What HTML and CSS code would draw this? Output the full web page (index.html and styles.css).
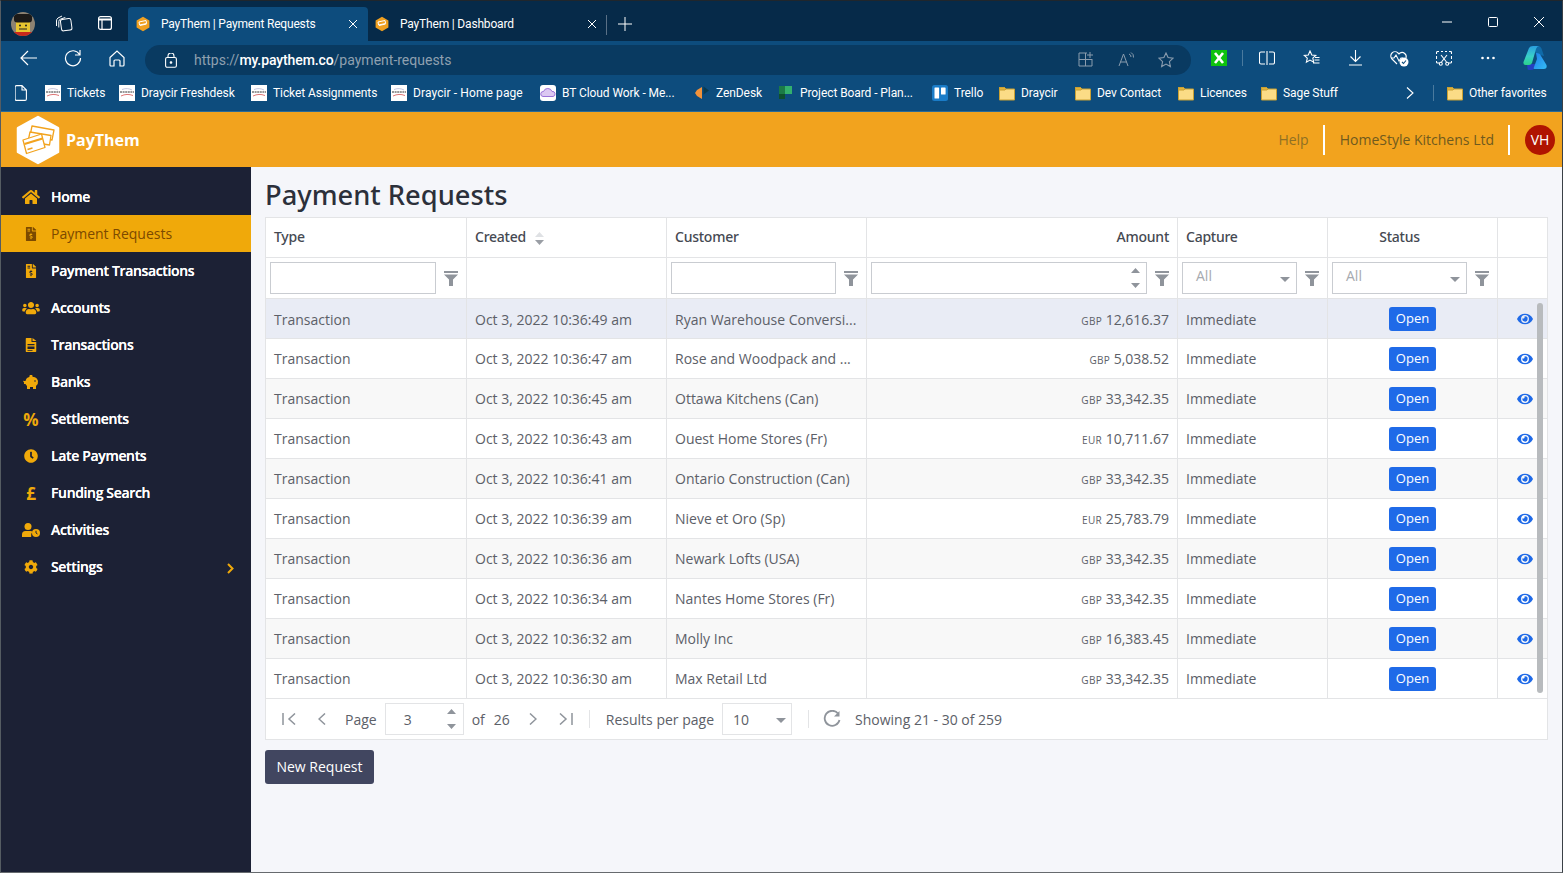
FILE: index.html
```html
<!DOCTYPE html>
<html lang="en">
<head>
<meta charset="utf-8">
<title>PayThem | Payment Requests</title>
<link rel="stylesheet" href="styles.css">
</head>
<body>
<svg class="defs" width="0" height="0" aria-hidden="true">
  <symbol id="fav" viewBox="0 0 16 16"><polygon points="8,.8 14.4,4.4 14.4,11.6 8,15.2 1.6,11.6 1.6,4.4" fill="#f0a020"/><path d="M4 6l7-1.5.6 3-7 1.5zM5 9.5l6.500-1.500" stroke="#fff" stroke-width="1" fill="none"/></symbol>
  <symbol id="dray" viewBox="0 0 16 16"><rect width="16" height="16" fill="#fff"/><path d="M1 7h14" stroke="#777" stroke-width="1.600" stroke-dasharray="2 .6"/><path d="M2 11c4-2 8-2 12-.5" stroke="#d77" fill="none"/><path d="M3 4.500c4-1.500 7-1 10 .5" stroke="#aac" fill="none" stroke-width=".7"/></symbol>
  <symbol id="folder" viewBox="0 0 16 16"><path d="M.5 2.500h5l1.500 1.500h8.500v11H.5z" fill="#fbdc86" stroke="#c9a033"/><path d="M.5 2.500h5l1.500 1.500-1 1H.5z" fill="#e0b23c" stroke="#c9a033"/></symbol>
  <symbol id="funnel" viewBox="0 0 14 15"><path d="M0 0h14v2H0zM0 3.500h14L9 8.500V15H5V8.500z" fill="#8f949b"/></symbol>
  <symbol id="eye" viewBox="0 0 576 512"><path fill="#1f6ae8" d="M572.52 241.4C518.29 135.59 410.93 64 288 64S57.68 135.64 3.48 241.41a32.35 32.35 0 0 0 0 29.19C57.71 376.41 165.07 448 288 448s230.32-71.64 284.52-177.41a32.35 32.35 0 0 0 0-29.19zM288 400a144 144 0 1 1 144-144 143.93 143.93 0 0 1-144 144zm0-240a95.31 95.31 0 0 0-25.31 3.79 47.85 47.85 0 0 1-66.9 66.9A95.78 95.78 0 1 0 288 160z"/></symbol>
  <symbol id="invoice" viewBox="0 0 384 512"><path fill="currentColor" d="M377 105L279.1 7c-4.5-4.5-10.6-7-17-7H256v128h128v-6.100c0-6.300-2.500-12.400-7-16.900zm-153 31V0H24C10.700 0 0 10.700 0 24v464c0 13.300 10.700 24 24 24h336c13.300 0 24-10.700 24-24V160H248c-13.200 0-24-10.800-24-24zM64 72c0-4.420 3.580-8 8-8h80c4.420 0 8 3.580 8 8v16c0 4.420-3.580 8-8 8H72c-4.420 0-8-3.580-8-8V72zm0 80v-16c0-4.420 3.580-8 8-8h80c4.420 0 8 3.580 8 8v16c0 4.420-3.580 8-8 8H72c-4.420 0-8-3.580-8-8zm144 263.880V440c0 4.420-3.580 8-8 8h-16c-4.420 0-8-3.580-8-8v-24.290c-11.290-.58-22.270-4.520-31.370-11.350-3.900-2.930-4.100-8.770-.57-12.140l11.750-11.210c2.770-2.640 6.890-2.760 10.130-.73 3.870 2.420 8.260 3.720 12.820 3.720h28.110c6.500 0 11.800-5.920 11.800-13.190 0-5.950-3.610-11.190-8.770-12.730l-45-13.500c-18.590-5.580-31.580-23.420-31.580-43.390 0-24.520 19.050-44.440 42.670-45.070V232c0-4.420 3.580-8 8-8h16c4.420 0 8 3.580 8 8v24.290c11.290.58 22.270 4.510 31.370 11.350 3.900 2.930 4.100 8.770.57 12.140l-11.750 11.210c-2.770 2.640-6.890 2.760-10.130.73-3.870-2.430-8.260-3.720-12.820-3.720h-28.110c-6.500 0-11.800 5.920-11.800 13.190 0 5.950 3.610 11.190 8.770 12.730l45 13.500c18.590 5.580 31.580 23.420 31.580 43.390 0 24.530-19.050 44.440-42.670 45.070z"/></symbol>
</svg>

<div class="frame">
  <div class="tabstrip">
    <svg class="avatar" width="24" height="24" viewBox="0 0 24 24"><defs><clipPath id="c"><circle cx="12" cy="12" r="12"/></clipPath></defs><g clip-path="url(#c)"><rect width="24" height="24" fill="#8d8272"/><rect x="5" y="9" width="14" height="11" fill="#e8c530"/><rect x="3" y="2" width="18" height="8.500" rx="3" fill="#1c1a18"/><rect x="3" y="20" width="18" height="4" fill="#c8281c"/><circle cx="9" cy="13.500" r="1" fill="#222"/><circle cx="15" cy="13.500" r="1" fill="#222"/><path d="M8 17h8" stroke="#222"/></g></svg>
    <svg class="tbtn" width="18" height="18" viewBox="0 0 18 18" fill="none" stroke="#fff"><rect x="6" y="4" width="10.500" height="11.500" rx="2" transform="rotate(-8 11 10)"/><path d="M3.800 12.500V6.500q0-2 2-2.500l4.500-1.500"/><path d="M1.500 11V6q0-2 1.500-3l4-2"/></svg>
    <svg class="tbtn" width="16" height="16" viewBox="0 0 16 16" fill="none" stroke="#fff" stroke-width="1.200"><rect x="1.600" y="1.600" width="12.800" height="12.800" rx="2"/><path d="M1.600 4.500h12.800" stroke-width="2"/><path d="M5 4.500v10" /></svg>
    <div class="tab active">
      <svg width="16" height="16"><use href="#fav"/></svg><span class="tabtitle">PayThem | Payment Requests</span>
      <svg class="x" width="10" height="10" viewBox="0 0 10 10" stroke="#fff"><path d="M1 1l8 8M9 1l-8 8"/></svg>
    </div>
    <div class="tab">
      <svg width="16" height="16"><use href="#fav"/></svg><span class="tabtitle">PayThem | Dashboard</span>
      <svg class="x" width="10" height="10" viewBox="0 0 10 10" stroke="#fff"><path d="M1 1l8 8M9 1l-8 8"/></svg>
    </div>
    <span class="tabsep"></span>
    <svg class="plus" width="14" height="14" viewBox="0 0 14 14" stroke="#fff"><path d="M7 0v14M0 7h14"/></svg>
    <div class="winbtns">
      <svg width="10" height="10" viewBox="0 0 10 10" stroke="#fff"><path d="M0 5h10"/></svg>
      <svg width="10" height="10" viewBox="0 0 10 10" stroke="#fff" fill="none"><rect x=".5" y=".5" width="9" height="9" rx="1"/></svg>
      <svg width="10" height="10" viewBox="0 0 10 10" stroke="#fff"><path d="M0 0l10 10M10 0L0 10"/></svg>
    </div>
  </div>

  <div class="toolbar">
    <span class="ti"><svg width="18" height="16" viewBox="0 0 18 16" fill="none" stroke="#fff" stroke-width="1.200"><path d="M17 8H1M8 1L1 8l7 7"/></svg></span>
    <span class="ti"><svg width="18" height="18" viewBox="0 0 18 18" fill="none" stroke="#fff" stroke-width="1.200"><path d="M15.500 5.500A7.500 7.500 0 1 0 16.500 9M16 1v5h-5"/></svg></span>
    <span class="ti"><svg width="16" height="17" viewBox="0 0 16 17" fill="none" stroke="#fff" stroke-width="1.200"><path d="M1 7.500L8 1l7 6.500V15a1 1 0 0 1-1 1h-3v-5a1 1 0 0 0-1-1H6a1 1 0 0 0-1 1v5H2a1 1 0 0 1-1-1z"/></svg></span>
    <div class="address">
      <svg class="lock" width="12" height="15" viewBox="0 0 12 15" fill="none" stroke="#fff" stroke-width="1.100"><rect x=".6" y="4.500" width="10.800" height="9.800" rx="1.500"/><path d="M3 4.500V3a3 3 0 0 1 6 0v1.500"/><circle cx="6" cy="9.500" r=".8" fill="#fff"/></svg>
      <span class="url"><span class="dim">https://</span><span class="host">my.paythem.co</span><span class="dim">/payment-requests</span></span>
      <span class="addr-icons">
        <svg width="16" height="15" viewBox="0 0 16 15" fill="none" stroke="#8a9cae"><path d="M9 1H1v13h13V7M1 7.500h13M7.500 1v13M12 0v6M9 3h6"/></svg>
        <svg width="16" height="15" viewBox="0 0 16 15" fill="none" stroke="#8a9cae"><path d="M1 14L5.500 2 10 14M2.500 10h6M11 2a3 3 0 0 1 2 3M13 .5a5 5 0 0 1 2.500 5"/></svg>
        <svg width="16" height="16" viewBox="0 0 16 16" fill="none" stroke="#8a9cae" stroke-width="1.100"><path d="M8 1l2.100 4.600 5 .6-3.700 3.400 1 5L8 12.100 3.600 14.600l1-5L.9 6.200l5-.6z"/></svg>
      </span>
    </div>
    <span class="ti ext"><svg width="16" height="16" viewBox="0 0 16 16"><rect width="16" height="16" fill="#0ec20e"/><path d="M4 3l8 10M12 3L4 13" stroke="#fff" stroke-width="2.600"/></svg></span>
    <span class="tsep"></span>
    <span class="ti ta"><svg width="16" height="14" viewBox="0 0 16 14" fill="none" stroke="#fff" stroke-width="1.100"><path d="M6 1H2a1.500 1.500 0 0 0-1.500 1.500v9A1.500 1.500 0 0 0 2 13h4M10 1h4a1.500 1.500 0 0 1 1.500 1.500v9A1.500 1.500 0 0 1 14 13h-4M8 0v14"/></svg></span>
    <span class="ti ta"><svg width="17" height="16" viewBox="0 0 17 16" fill="none" stroke="#fff" stroke-width="1.100"><path d="M7 1l1.800 4 4 .4-3 2.800.9 4L7 10.100 3.400 12.200l.9-4-3-2.800 4-.4zM12 7.500h4.500M11.500 10h5M10 13h6.500" /></svg></span>
    <span class="ti ta"><svg width="13" height="16" viewBox="0 0 13 16" fill="none" stroke="#fff" stroke-width="1.100"><path d="M6.500 0v11M1.500 6.500l5 5 5-5M0 15h13"/></svg></span>
    <span class="ti ta"><svg width="19" height="17" viewBox="0 0 19 17" fill="none" stroke="#fff" stroke-width="1.100"><path d="M7 14L2 9a4.200 4.200 0 0 1 6-6l1 1 1-1a4.200 4.200 0 0 1 6 5"/><path d="M1 8h3l2-3 3 6 2-3h2"/><circle cx="14" cy="12" r="4.500" fill="#fff" stroke="none"/><path d="M12 12l1.500 1.500L16 10.500" stroke="#0d4c7d"/></svg></span>
    <span class="ti ta"><svg width="16" height="15" viewBox="0 0 16 15" fill="none" stroke="#fff" stroke-width="1.100"><path d="M3 .5H1.500a1 1 0 0 0-1 1V3M.5 5v3M5 .5h2M9 .5h2M13 .5h1.500a1 1 0 0 1 1 1V3M15.500 5v3M.5 10v1a1 1 0 0 0 1 1H3M15.500 10v1a1 1 0 0 1-1 1H13"/><path d="M5 4l5.500 7M11 4l-5.500 7"/><circle cx="4.800" cy="12.800" r="1.500"/><circle cx="11.200" cy="12.800" r="1.500"/></svg></span>
    <span class="ti ta"><svg width="14" height="4" viewBox="0 0 14 4" fill="#fff"><circle cx="1.500" cy="2" r="1.300"/><circle cx="7" cy="2" r="1.300"/><circle cx="12.500" cy="2" r="1.300"/></svg></span>
    <span class="ti copilot"><svg width="25" height="24" viewBox="0 0 25 24"><defs><linearGradient id="g1" x1="0" y1="0" x2="1" y2="1"><stop offset="0" stop-color="#1f7ee8"/><stop offset="1" stop-color="#34bcf6"/></linearGradient><linearGradient id="g2" x1="0" y1="0" x2="0" y2="1"><stop offset="0" stop-color="#2a9ee0"/><stop offset=".55" stop-color="#3ad0c8"/><stop offset="1" stop-color="#2ad08a"/></linearGradient></defs><path d="M10 0h5q3 0 4 4l2 6-8-2z" fill="#0f6aa8"/><path d="M4 18h9l-2 5q-1 1-3 1H6q-2 0-1.500-2z" fill="#2440c0"/><path d="M13 7q4 0 5 3l5.500 9q1 4-3 4H12q-2 0-1-2l3-8z" fill="url(#g1)"/><path d="M6 2q1-2 4-2h6q-2 0-3 3L9 17q-1 2-3 2H2.500q-2.500 0-2-3z" fill="url(#g2)"/></svg></span>
  </div>

  <div class="bookmarks">
    <svg class="bfile" width="12" height="16" viewBox="0 0 12 16" fill="none" stroke="#fff" stroke-width="1.100"><path d="M1.500.6h5.500l4.400 4.400v9a1.400 1.400 0 0 1-1.400 1.400h-8.500a1.400 1.400 0 0 1-1.400-1.400V2a1.400 1.400 0 0 1 1.400-1.400zM7 .6V5h4.400"/></svg>
    <a class="bm w1"><svg width="16" height="16"><use href="#dray"/></svg>Tickets</a>
    <a class="bm w2"><svg width="16" height="16"><use href="#dray"/></svg>Draycir Freshdesk</a>
    <a class="bm w3"><svg width="16" height="16"><use href="#dray"/></svg>Ticket Assignments</a>
    <a class="bm w4"><svg width="16" height="16"><use href="#dray"/></svg>Draycir - Home page</a>
    <a class="bm w5"><svg width="16" height="16" viewBox="0 0 16 16"><rect width="16" height="16" rx="3" fill="#fff"/><path d="M3 11.500a2.500 2.500 0 0 1 .5-5 4.500 4.500 0 0 1 8.500 0 2.500 2.500 0 0 1 1 5z" fill="#dcc8f2" stroke="#9a72d8"/></svg>BT Cloud Work - Me...</a>
    <a class="bm w6"><svg width="16" height="16" viewBox="0 0 16 16"><path d="M8 2v12L3 11 1 8l2-3z" fill="#f2923a"/><path d="M9.500 1.500v8L15 5.500z" fill="#0b3a50"/></svg>ZenDesk</a>
    <a class="bm w7"><svg width="16" height="16" viewBox="0 0 16 16"><rect x="1" y="1" width="6" height="13" fill="#1b7a47"/><rect x="7" y="1" width="7" height="8" fill="#33b06e"/><rect x="1" y="9" width="6" height="5" fill="#0e4f2e"/></svg>Project Board - Plan...</a>
    <a class="bm w8"><svg width="16" height="16" viewBox="0 0 16 16"><rect width="16" height="16" rx="2.500" fill="#1a7cc8"/><rect x="2.500" y="2.500" width="4.600" height="11" rx=".6" fill="#fff"/><rect x="9" y="2.500" width="4.600" height="7" rx=".6" fill="#fff"/></svg>Trello</a>
    <a class="bm w9"><svg width="16" height="16"><use href="#folder"/></svg>Draycir</a>
    <a class="bm w10"><svg width="16" height="16"><use href="#folder"/></svg>Dev Contact</a>
    <a class="bm w11"><svg width="16" height="16"><use href="#folder"/></svg>Licences</a>
    <a class="bm w12"><svg width="16" height="16"><use href="#folder"/></svg>Sage Stuff</a>
    <svg class="bmore" width="8" height="12" viewBox="0 0 8 12" fill="none" stroke="#fff" stroke-width="1.100"><path d="M1 .5L7 6l-6 5.500"/></svg>
    <span class="bsep"></span>
    <a class="bm other"><svg width="16" height="16"><use href="#folder"/></svg>Other favorites</a>
  </div>

  <header class="apphead">
    <svg class="logo" width="46" height="50" viewBox="0 0 46 50"><polygon points="23,2 43,13 43,37 23,48 3,37 3,13" fill="#fff" stroke="#fff" stroke-width="2.500" stroke-linejoin="round"/><g fill="#fff" stroke="#f2a31e" stroke-width="1.300" stroke-linejoin="round"><polygon points="17,11 39,15 37,25 15,21"/><polygon points="15,17 36,20.500 34.500,30 13,26.500"/><polygon points="8,25 26.500,19 30,32.500 11.500,38.500"/></g><path d="M9.500 29l18-5.500" stroke="#f2a31e" stroke-width="2.200"/><path d="M12.500 34.500l5-1.500" stroke="#f2a31e" stroke-width="1.500"/></svg>
    <span class="brand">PayThem</span>
    <span class="grow"></span>
    <span class="help">Help</span>
    <span class="hdiv"></span>
    <span class="company">HomeStyle Kitchens Ltd</span>
    <span class="hdiv"></span>
    <span class="vh">VH</span>
  </header>

  <div class="body">
    <nav class="side">
      <a class="nav"><svg class="ni" width="18" height="16" viewBox="0 0 576 512"><path fill="currentColor" d="M280.370 148.260L96 300.110V464a16 16 0 0 0 16 16l112.060-.29a16 16 0 0 0 15.920-16V368a16 16 0 0 1 16-16h64a16 16 0 0 1 16 16v95.640a16 16 0 0 0 16 16.050L464 480a16 16 0 0 0 16-16V300L295.670 148.260a12.190 12.190 0 0 0-15.300 0zM571.600 251.470L488 182.560V44.050a12 12 0 0 0-12-12h-56a12 12 0 0 0-12 12v72.610L318.470 43a48 48 0 0 0-61 0L4.340 251.470a12 12 0 0 0-1.600 16.900l25.500 31A12 12 0 0 0 45.150 301l235.220-193.740a12.190 12.190 0 0 1 15.300 0L530.900 301a12 12 0 0 0 16.900-1.600l25.500-31a12 12 0 0 0-1.700-16.930z"/></svg>Home</a>
      <a class="nav on"><svg class="ni" width="11" height="14"><use href="#invoice"/></svg>Payment Requests</a>
      <a class="nav"><svg class="ni" width="11" height="14"><use href="#invoice"/></svg>Payment Transactions</a>
      <a class="nav"><svg class="ni" width="18" height="14" viewBox="0 0 640 512"><path fill="currentColor" d="M96 224c35.300 0 64-28.700 64-64s-28.700-64-64-64-64 28.700-64 64 28.700 64 64 64zm448 0c35.300 0 64-28.700 64-64s-28.700-64-64-64-64 28.700-64 64 28.700 64 64 64zm32 32h-64c-17.600 0-33.500 7.100-45.100 18.600 40.300 22.100 68.900 62 75.100 109.400h66c17.700 0 32-14.300 32-32v-32c0-35.300-28.700-64-64-64zm-256 0c61.900 0 112-50.100 112-112S381.900 32 320 32 208 82.100 208 144s50.100 112 112 112zm76.800 32h-8.300c-20.800 10-43.900 16-68.500 16s-47.600-6-68.500-16h-8.300C179.600 288 128 339.600 128 403.200V432c0 26.500 21.500 48 48 48h288c26.500 0 48-21.500 48-48v-28.800c0-63.600-51.600-115.200-115.200-115.200zm-223.700-13.400C161.500 263.100 145.600 256 128 256H64c-35.300 0-64 28.700-64 64v32c0 17.700 14.300 32 32 32h65.900c6.300-47.400 34.900-87.300 75.200-109.400z"/></svg>Accounts</a>
      <a class="nav"><svg class="ni" width="11" height="14" viewBox="0 0 11 14"><path fill="currentColor" d="M1 0h5v4h5v9a1 1 0 0 1-1 1H1a1 1 0 0 1-1-1V1a1 1 0 0 1 1-1zm6 0l4 3H7zM2 6v1.200h7V6zm0 2.500v2.500h7V8.500zM2 12v.8h5V12z"/><rect x="3" y="9.200" width="5" height="1" fill="#1c2135"/></svg>Transactions</a>
      <a class="nav"><svg class="ni" width="16" height="14" viewBox="0 0 16 14"><path fill="currentColor" d="M4 3q3-2 7-1 3 .5 4 4 .5 3-2 5v3h-3v-2H7v2H4v-3Q3 10 2.500 9H1V6h1.500Q3 4 4 3zM0 6q1-.5 1.500.5L1 7.500z"/><circle cx="8" cy="1.200" r="1.500" fill="currentColor"/><circle cx="12" cy="6" r=".8" fill="#1c2135"/></svg>Banks</a>
      <a class="nav"><span class="ng">%</span>Settlements</a>
      <a class="nav"><svg class="ni" width="14" height="14" viewBox="0 0 512 512"><path fill="currentColor" d="M256,8C119,8,8,119,8,256S119,504,256,504,504,393,504,256,393,8,256,8Zm92.490,313h0l-20,25a16,16,0,0,1-22.490,2.500h0l-67-49.720a40,40,0,0,1-15-31.230V112a16,16,0,0,1,16-16h32a16,16,0,0,1,16,16V256l58,42.500A16,16,0,0,1,348.490,321Z"/></svg>Late Payments</a>
      <a class="nav"><span class="ng">£</span>Funding Search</a>
      <a class="nav"><svg class="ni" width="18" height="14" viewBox="0 0 18 14"><circle cx="6" cy="3.500" r="3.500" fill="currentColor"/><path fill="currentColor" d="M0 14v-2.500Q0 8 3.500 8h5Q10 8 10.500 8.500 9 10 9.200 14z"/><circle cx="14" cy="10" r="4" fill="currentColor"/><path d="M14 7.800V10l1.500 1" stroke="#1c2135" fill="none"/></svg>Activities</a>
      <a class="nav"><svg class="ni" width="14" height="14" viewBox="0 0 512 512"><path fill="currentColor" d="M487.400 315.700l-42.600-24.600c4.300-23.200 4.300-47 0-70.200l42.600-24.600c4.900-2.800 7.100-8.600 5.500-14-11.100-35.600-30-67.800-54.700-94.600-3.800-4.100-10-5.100-14.800-2.300L380.800 110c-17.900-15.400-38.500-27.300-60.800-35.100V25.800c0-5.600-3.900-10.500-9.400-11.700-36.700-8.200-74.300-7.800-109.200 0-5.500 1.200-9.400 6.100-9.400 11.700V75c-22.200 7.900-42.800 19.800-60.800 35.100L88.700 85.500c-4.900-2.800-11-1.900-14.800 2.300-24.700 26.700-43.600 58.900-54.700 94.600-1.700 5.400.6 11.200 5.500 14L67.300 221c-4.300 23.200-4.300 47 0 70.200l-42.600 24.600c-4.900 2.800-7.100 8.600-5.500 14 11.100 35.600 30 67.800 54.700 94.600 3.800 4.100 10 5.100 14.800 2.300l42.600-24.600c17.900 15.400 38.500 27.300 60.800 35.100v49.200c0 5.600 3.900 10.500 9.400 11.700 36.700 8.200 74.300 7.800 109.200 0 5.500-1.200 9.400-6.100 9.400-11.700v-49.200c22.200-7.900 42.800-19.800 60.800-35.100l42.600 24.600c4.900 2.800 11 1.900 14.800-2.300 24.700-26.700 43.600-58.900 54.700-94.600 1.500-5.500-.7-11.300-5.600-14.100zM256 336c-44.100 0-80-35.900-80-80s35.900-80 80-80 80 35.900 80 80-35.900 80-80 80z"/></svg>Settings<svg class="navchev" width="7" height="11" viewBox="0 0 7 11" fill="none" stroke="currentColor" stroke-width="2"><path d="M1 1l4.500 4.500L1 10"/></svg></a>
    </nav>

    <main class="main">
      <h1>Payment Requests</h1>
      <div class="grid">
        <table>
          <colgroup><col class="c1"><col class="c2"><col class="c3"><col class="c4"><col class="c5"><col class="c6"><col class="c7"></colgroup>
          <thead>
            <tr class="hr">
              <th>Type</th>
              <th>Created<svg class="sort" width="9" height="15" viewBox="0 0 9 15"><path d="M4.500 1L9 6H0z" fill="#dfe1e4"/><path d="M4.500 14L0 9h9z" fill="#9a9ea5"/></svg></th>
              <th>Customer</th>
              <th class="r">Amount</th>
              <th>Capture</th>
              <th class="stat">Status</th>
              <th></th>
            </tr>
            <tr class="fr">
              <td><div class="fc"><span class="fi"></span><svg width="14" height="15"><use href="#funnel"/></svg></div></td>
              <td></td>
              <td><div class="fc"><span class="fi"></span><svg width="14" height="15"><use href="#funnel"/></svg></div></td>
              <td><div class="fc"><span class="fi num"><svg width="11" height="24" viewBox="0 0 11 24" fill="#8f949b"><path d="M5.500 2L10 7H1zM5.500 22L1 17h9z"/></svg></span><svg width="14" height="15"><use href="#funnel"/></svg></div></td>
              <td><div class="fc"><span class="fi sel">All<i class="caret"></i></span><svg width="14" height="15"><use href="#funnel"/></svg></div></td>
              <td><div class="fc"><span class="fi sel">All<i class="caret"></i></span><svg width="14" height="15"><use href="#funnel"/></svg></div></td>
              <td></td>
            </tr>
          </thead>
          <tbody>
            <tr class="hl"><td>Transaction</td><td>Oct 3, 2022 10:36:49 am</td><td>Ryan Warehouse Conversi...</td><td class="r"><small>GBP</small> 12,616.37</td><td>Immediate</td><td class="c"><span class="open">Open</span></td><td class="e"><svg width="16" height="14"><use href="#eye"/></svg></td></tr>
            <tr><td>Transaction</td><td>Oct 3, 2022 10:36:47 am</td><td>Rose and Woodpack and ...</td><td class="r"><small>GBP</small> 5,038.52</td><td>Immediate</td><td class="c"><span class="open">Open</span></td><td class="e"><svg width="16" height="14"><use href="#eye"/></svg></td></tr>
            <tr class="alt"><td>Transaction</td><td>Oct 3, 2022 10:36:45 am</td><td>Ottawa Kitchens (Can)</td><td class="r"><small>GBP</small> 33,342.35</td><td>Immediate</td><td class="c"><span class="open">Open</span></td><td class="e"><svg width="16" height="14"><use href="#eye"/></svg></td></tr>
            <tr><td>Transaction</td><td>Oct 3, 2022 10:36:43 am</td><td>Ouest Home Stores (Fr)</td><td class="r"><small>EUR</small> 10,711.67</td><td>Immediate</td><td class="c"><span class="open">Open</span></td><td class="e"><svg width="16" height="14"><use href="#eye"/></svg></td></tr>
            <tr class="alt"><td>Transaction</td><td>Oct 3, 2022 10:36:41 am</td><td>Ontario Construction (Can)</td><td class="r"><small>GBP</small> 33,342.35</td><td>Immediate</td><td class="c"><span class="open">Open</span></td><td class="e"><svg width="16" height="14"><use href="#eye"/></svg></td></tr>
            <tr><td>Transaction</td><td>Oct 3, 2022 10:36:39 am</td><td>Nieve et Oro (Sp)</td><td class="r"><small>EUR</small> 25,783.79</td><td>Immediate</td><td class="c"><span class="open">Open</span></td><td class="e"><svg width="16" height="14"><use href="#eye"/></svg></td></tr>
            <tr class="alt"><td>Transaction</td><td>Oct 3, 2022 10:36:36 am</td><td>Newark Lofts (USA)</td><td class="r"><small>GBP</small> 33,342.35</td><td>Immediate</td><td class="c"><span class="open">Open</span></td><td class="e"><svg width="16" height="14"><use href="#eye"/></svg></td></tr>
            <tr><td>Transaction</td><td>Oct 3, 2022 10:36:34 am</td><td>Nantes Home Stores (Fr)</td><td class="r"><small>GBP</small> 33,342.35</td><td>Immediate</td><td class="c"><span class="open">Open</span></td><td class="e"><svg width="16" height="14"><use href="#eye"/></svg></td></tr>
            <tr class="alt"><td>Transaction</td><td>Oct 3, 2022 10:36:32 am</td><td>Molly Inc</td><td class="r"><small>GBP</small> 16,383.45</td><td>Immediate</td><td class="c"><span class="open">Open</span></td><td class="e"><svg width="16" height="14"><use href="#eye"/></svg></td></tr>
            <tr><td>Transaction</td><td>Oct 3, 2022 10:36:30 am</td><td>Max Retail Ltd</td><td class="r"><small>GBP</small> 33,342.35</td><td>Immediate</td><td class="c"><span class="open">Open</span></td><td class="e"><svg width="16" height="14"><use href="#eye"/></svg></td></tr>
          </tbody>
        </table>
        <span class="sbar"></span>
        <div class="pager">
          <svg class="pg p1" width="14" height="12" viewBox="0 0 14 12" fill="none" stroke="#8f949b" stroke-width="1.500"><path d="M1 0v12M13 .5L7 6l6 5.500"/></svg>
          <svg class="pg p2" width="8" height="12" viewBox="0 0 8 12" fill="none" stroke="#8f949b" stroke-width="1.500"><path d="M7 .5L1 6l6 5.500"/></svg>
          <span class="p3">Page</span>
          <span class="pinput"><span>3</span><svg width="11" height="24" viewBox="0 0 11 24" fill="#8f949b"><path d="M5.500 2L10 7H1zM5.500 22L1 17h9z"/></svg></span>
          <span class="p4">of</span><span class="p5">26</span>
          <svg class="pg p6" width="8" height="12" viewBox="0 0 8 12" fill="none" stroke="#8f949b" stroke-width="1.500"><path d="M1 .5L7 6l-6 5.500"/></svg>
          <svg class="pg p7" width="14" height="12" viewBox="0 0 14 12" fill="none" stroke="#8f949b" stroke-width="1.500"><path d="M13 0v12M1 .5L7 6l-6 5.500"/></svg>
          <span class="psep s1"></span>
          <span class="p8">Results per page</span>
          <span class="psel">10<i class="caret"></i></span>
          <span class="psep s2"></span>
          <svg class="p9" width="18" height="18" viewBox="0 0 18 18" fill="none" stroke="#8f949b" stroke-width="1.800"><path d="M15 3.500A7.500 7.500 0 1 0 16.500 10"/><path d="M16.500 1v5.500H11z" fill="#8f949b" stroke="none"/></svg>
          <span class="p10">Showing 21 - 30 of 259</span>
        </div>
      </div>
      <button class="newreq" type="button">New Request</button>
    </main>
  </div>
</div>
</body>
</html>
```

FILE: styles.css
```css
* { box-sizing: border-box; }
html, body { margin: 0; height: 100%; overflow: hidden; }
body { font-family: "Open Sans", sans-serif; background: #f5f6fa; color: #5c6068; }
.defs { position: absolute; }
svg { display: block; flex: none; }

.frame { height: 873px; display: flex; flex-direction: column; border-top: 1px solid #20262c; border-left: 1px solid #555c62; border-right: 1px solid #3a4046; border-bottom: 1px solid #666a6e; }

/* browser chrome */
.tabstrip { height: 40px; background: #062a49; display: flex; align-items: flex-start; font-family: Roboto, sans-serif; font-size: 12px; color: #fff; position: relative; flex: none; }
.avatar { margin: 11px 0 0 10px; }
.tbtn { margin: 14px 0 0 20px; }
.tbtn + .tbtn { margin-left: 24px; }
.tab { height: 34px; margin-top: 6px; width: 240px; display: flex; align-items: center; padding: 0 10px 0 7px; border-radius: 4px 4px 0 0; }
.tbtn + .tab { margin-left: 15px; }
.tab.active { background: #0d4c7d; }
.tabtitle { margin-left: 10px; flex: 1; letter-spacing: -.18px; }
.tab:not(.active) { padding-left: 6px; padding-right: 11px; }
.tabsep { width: 1px; height: 20px; background: #5a7086; margin: 14px 0 0 -2px; }
.plus { margin: 16px 0 0 11px; }
.winbtns { margin-left: auto; margin-top: 16px; display: flex; gap: 36px; padding-right: 18px; }
.winbtns svg { width: 10px; }

.toolbar { height: 34px; background: #0d4c7d; display: flex; align-items: center; padding-left: 6px; flex: none; }
.ti { width: 44px; height: 34px; display: flex; align-items: center; justify-content: center; flex: none; }
.ti.ta { width: 44.200px; }
.ext { margin-left: 6px; }
.copilot { margin-left: 3px; }
.address { width: 1046px; height: 30px; margin: 4px 0 0 6px; background: #093a61; border-radius: 15px; display: flex; align-items: center; padding-left: 20px; flex: none; align-self: flex-start; font-family: Roboto, sans-serif; font-size: 14px; }
.url { margin-left: 17px; }
.dim { color: #8fa0b0; }
.host { color: #fff; font-weight: 500; letter-spacing: -.1px; }
.addr-icons { margin-left: auto; padding-right: 17px; display: flex; gap: 24px; }
.tsep { width: 1px; height: 16px; background: #4a7a9e; margin: 0 2px 0 1px; flex: none; }

.bookmarks { height: 37px; background: #0d4c7d; border-bottom: 1px solid #2a6a98; display: flex; align-items: center; font-family: Roboto, sans-serif; font-size: 12px; letter-spacing: -.08px; color: #fff; flex: none; }
.bfile { margin: 0 0 0 14px; }
.bm { display: flex; align-items: center; gap: 6px; white-space: nowrap; }
.w1 { margin-left: 18px; width: 74px; }
.w2 { width: 132px; }
.w3 { width: 140px; }
.w4 { width: 149px; letter-spacing: .1px; }
.w5 { width: 154px; }
.w6 { width: 84px; }
.w7 { width: 154px; }
.w8 { width: 67px; }
.w9 { width: 76px; }
.w10 { width: 103px; }
.w11 { width: 83px; }
.w12 { width: 100px; }
.bmore { margin-left: 45px; }
.bsep { width: 1px; height: 16px; background: #4a7a9e; margin-left: 19px; }
.other { margin-left: 13px; }

/* app header */
.apphead { height: 55px; background: #f2a31e; display: flex; align-items: center; flex: none; padding-right: 7px; }
.logo { margin-left: 14px; }
.brand { margin-left: 5px; color: #fff; font-weight: 700; font-size: 16px; }
.grow { flex: 1; }
.help, .company { font-size: 14px; }
.help { color: #8f7024; }
.company { color: #6f5a1e; }
.hdiv { width: 2px; height: 30px; background: #fff; }
.help + .hdiv { margin: 0 15px 0 14px; }
.company + .hdiv { margin: 0 15px 0 14px; }
.vh { width: 30px; height: 30px; border-radius: 50%; background: #b01400; color: #fff; font-size: 14px; display: flex; align-items: center; justify-content: center; }

.body { flex: 1; display: flex; min-height: 0; }

/* sidebar */
.side { width: 250px; background: #1c2135; padding-top: 11px; flex: none; }
.nav { height: 37px; display: flex; align-items: center; padding-left: 50px; position: relative; color: #fff; font-size: 14px; font-weight: 600; letter-spacing: -.35px; text-shadow: 0 0 .6px #fff; }
.nav .ni, .nav .ng { position: absolute; left: 30px; top: 50%; transform: translate(-50%, -50%); color: #f0a90a; text-shadow: none; }
.ng { font-size: 17px; font-weight: 700; letter-spacing: 0; }
.nav.on { background: #f0a90a; color: #7c4a00; font-weight: 400; letter-spacing: 0; text-shadow: none; }
.nav.on .ni { color: #7c4a00; }
.navchev { position: absolute; right: 17px; top: 15px; color: #f0a90a; }

/* main */
.main { flex: 1; padding: 0 0 0 14px; min-width: 0; }
h1 { margin: 10px 0 0; height: 40px; font-family: "Noto Sans", sans-serif; font-size: 27.300px; line-height: 35px; font-weight: 500; color: #2c303a; }
.grid { width: 1283px; position: relative; background: #fff; border: 1px solid #e3e4e6; border-top: 0; }
table { width: 1283px; margin-left: -1px; table-layout: fixed; border-collapse: collapse; font-size: 14px; }
.c1 { width: 201px; } .c2 { width: 200px; } .c3 { width: 200px; } .c4 { width: 311px; } .c5 { width: 150px; } .c6 { width: 170px; } .c7 { width: 50px; }
th, td { border: 1px solid #e3e4e6; padding: 0 8px; white-space: nowrap; overflow: hidden; text-align: left; }
th { font-family: "Noto Sans", sans-serif; font-weight: 500; letter-spacing: -.25px; color: #454952; height: 40px; padding-bottom: 2px; }
.hr th svg.sort { display: inline-block; vertical-align: -4px; margin-left: 9px; }
.r, th.r { text-align: right; }
th.stat { text-align: center; padding-right: 34px; }
.fr td { height: 41px; padding: 0 0 0 4px; }
.fc { display: flex; align-items: center; gap: 8px; height: 32px; }
.fc > svg { margin-right: 8px; }
.fi { flex: 1; height: 32px; border: 1px solid #c9ccd1; background: #fff; display: flex; align-items: center; padding: 0 3px 4px 13px; color: #a6aab0; justify-content: space-between; line-height: 26px; }
.fi.num { justify-content: flex-end; padding: 0 5px 0 0; }
.caret { width: 0; height: 0; border-left: 5px solid transparent; border-right: 5px solid transparent; border-top: 5px solid #8f949b; margin: 7px 3px 0 0; }
tbody tr td { height: 40px; }
tbody tr.hl td { background: #e9ecf5; padding-top: 2px; }
tbody tr.hl td.c, tbody tr.hl td.e { padding-top: 0; }
tbody tr.alt td { background: #f8f8f8; }
td small { font-size: 10px; letter-spacing: .3px; }
td.c { text-align: center; padding: 0; }
td.e { padding: 0 0 0 19px; }
.open { display: inline-block; width: 47px; height: 24px; line-height: 23px; border-radius: 3px; background: #1f6ae8; color: #fff; font-size: 13px; vertical-align: middle; }
.sbar { position: absolute; left: 1271px; top: 86px; width: 6px; height: 390px; border-radius: 3px; background: #b8bbbe; }

.pager { height: 40px; display: flex; align-items: center; font-size: 14px; }
.pg { flex: none; }
.p1 { margin-left: 16px; }
.p2 { margin-left: 22px; }
.p3 { margin-left: 19px; }
.pinput { width: 79px; height: 32px; margin-left: 8px; border: 1px solid #e3e4e6; display: flex; align-items: center; justify-content: space-between; padding: 0 6px 0 18px; }
.p4 { margin-left: 8px; }
.p5 { margin-left: 9px; }
.p6 { margin-left: 19px; }
.p7 { margin-left: 22px; }
.psep { width: 1px; height: 18px; background: #e3e4e6; }
.s1 { margin-left: 16px; }
.p8 { margin-left: 16px; }
.psel { width: 70px; height: 32px; margin-left: 8px; border: 1px solid #e3e4e6; display: flex; align-items: center; justify-content: space-between; padding: 0 1px 0 10px; }
.psel .caret { margin: 2px 4px 0 0; }
.s2 { margin-left: 16px; }
.p9 { margin-left: 14px; }
.p10 { margin-left: 14px; }
.newreq { display: block; margin-top: 10px; width: 109px; height: 34px; border: 0; border-radius: 3px; background: #414660; color: #fff; font: 14px "Open Sans", sans-serif; padding: 0 0 2px; }
```
